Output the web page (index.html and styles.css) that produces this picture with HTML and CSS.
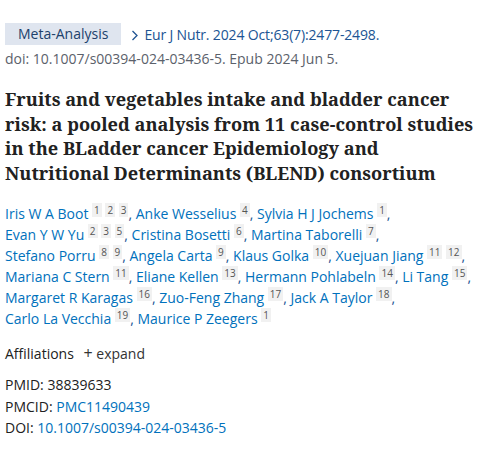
FILE: index.html
```html
<!DOCTYPE html>
<html>
<head>
<meta charset="utf-8">
<link rel="stylesheet" href="styles.css">
</head>
<body>
<main class="page">
  <div class="cite-row">
    <span class="pub-type">Meta-Analysis</span>
    <span class="journal"><svg class="chev" width="8" height="11" viewBox="0 0 8 11"><path d="M1.5 1 L6 5.5 L1.5 10" fill="none" stroke="#205493" stroke-width="1.3"/></svg>Eur J Nutr. 2024 Oct;63(7):2477-2498.</span>
  </div>
  <div class="doi-line">doi: 10.1007/s00394-024-03436-5. Epub 2024 Jun 5.</div>
  <h1 class="title">Fruits and vegetables intake and bladder cancer risk: a pooled analysis from 11 case-control studies in the BLadder cancer Epidemiology and Nutritional Determinants (BLEND) consortium</h1>
  <div class="authors">
    <span class="author">Iris W A Boot <sup>1</sup> <sup>2</sup> <sup>3</sup></span>, <span class="author">Anke Wesselius <sup>4</sup></span>, <span class="author">Sylvia H J Jochems <sup>1</sup></span>,<br>
    <span class="author">Evan Y W Yu <sup>2</sup> <sup>3</sup> <sup>5</sup></span>, <span class="author">Cristina Bosetti <sup>6</sup></span>, <span class="author">Martina Taborelli <sup>7</sup></span>,<br>
    <span class="author">Stefano Porru <sup>8</sup> <sup>9</sup></span>, <span class="author">Angela Carta <sup>9</sup></span>, <span class="author">Klaus Golka <sup>10</sup></span>, <span class="author">Xuejuan Jiang <sup>11</sup> <sup>12</sup></span>,<br>
    <span class="author">Mariana C Stern <sup>11</sup></span>, <span class="author">Eliane Kellen <sup>13</sup></span>, <span class="author">Hermann Pohlabeln <sup>14</sup></span>, <span class="author">Li Tang <sup>15</sup></span>,<br>
    <span class="author">Margaret R Karagas <sup>16</sup></span>, <span class="author">Zuo-Feng Zhang <sup>17</sup></span>, <span class="author">Jack A Taylor <sup>18</sup></span>,<br>
    <span class="author">Carlo La Vecchia <sup>19</sup></span>, <span class="author">Maurice P Zeegers <sup>1</sup></span>
  </div>
  <div class="affil">Affiliations <span class="expand"><span class="plus">+</span> expand</span></div>
  <ul class="ids">
    <li>PMID: 38839633</li>
    <li>PMCID: <span class="link">PMC11490439</span></li>
    <li>DOI: <span class="link">10.1007/s00394-024-03436-5</span></li>
  </ul>
</main>
</body>
</html>
```
FILE: styles.css
```css
html, body { margin: 0; padding: 0; background: #fff; }
body {
  font-family: "Open Sans", "Noto Sans", sans-serif;
  color: #212121;
  font-size: 14px;
}
.page { padding: 23px 5px 0 5px; }
.cite-row { display: flex; align-items: center; gap: 10px; height: 22px; }
.pub-type {
  background: #dfe5ef;
  color: #20416b;
  font-size: 14px;
  height: 22px;
  line-height: 22px;
  padding: 0 13px;
  white-space: nowrap;
}
.journal { color: #205493; font-size: 14px; white-space: nowrap; letter-spacing: -0.15px; }
.chev { display: inline-block; margin-right: 5px; vertical-align: -1px; }
.doi-line { color: #5b616b; font-size: 14px; margin-top: 4px; line-height: 20px; }
.title {
  font-family: "Noto Serif", "DejaVu Serif", serif;
  font-weight: bold;
  font-size: 18.2px;
  line-height: 24.5px;
  margin: 18px 0 0 0;
  color: #212121;
}
.authors {
  margin-top: 18px;
  color: #205493;
  font-size: 14px;
  line-height: 21px;
}
.author { color: #0071bc; }
sup {
  font-size: 10px;
  background: #f1f1f1;
  color: #555;
  padding: 0 2px;
  vertical-align: 5px;
  line-height: 1;
}
.affil { margin-top: 13px; color: #212121; font-size: 14px; }
.expand { margin-left: 6px; color: #333; }
.plus { font-size: 16px; }
.ids { list-style: none; margin: 10px 0 0 0; padding: 0; line-height: 21.5px; }
.link { color: #0071bc; }
```
